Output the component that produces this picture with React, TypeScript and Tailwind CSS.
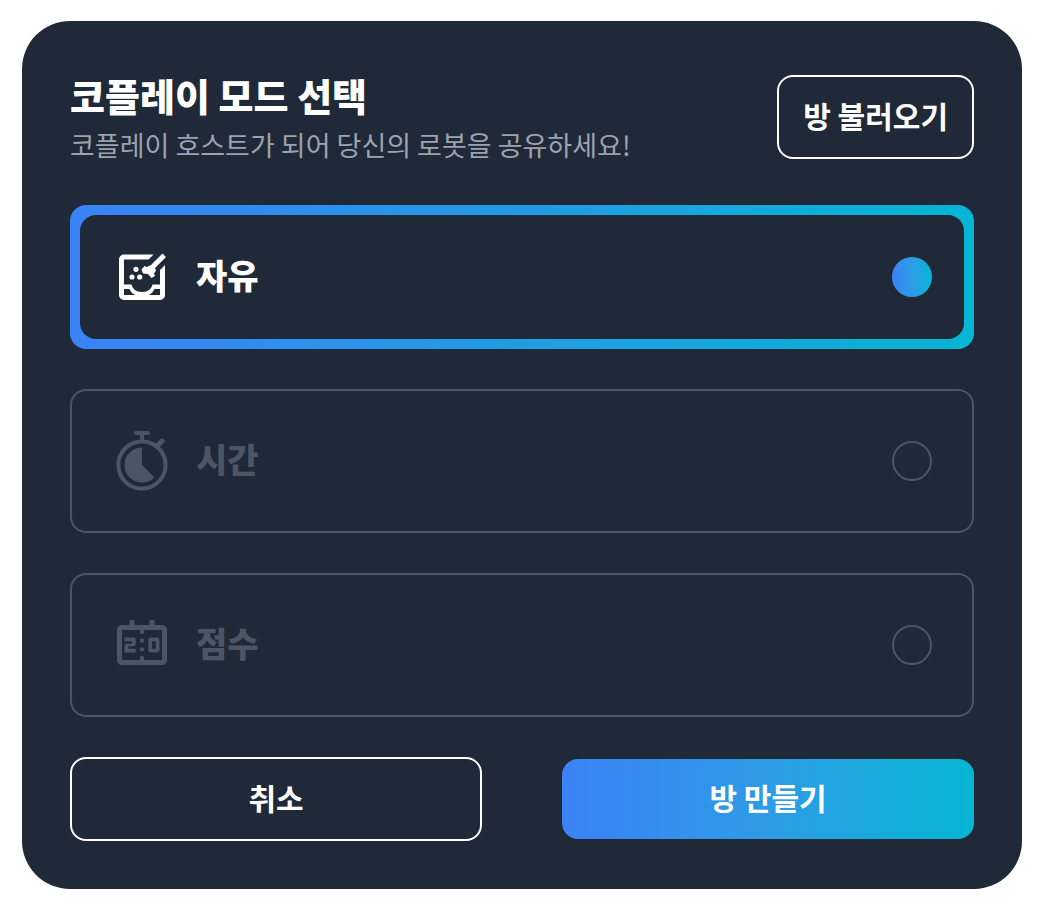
import { type ComponentType, useState } from "react";
import { MdOutlineScoreboard } from "react-icons/md";
import { RxLapTimer } from "react-icons/rx";

type ModeId = "free" | "time" | "score";

interface IconProps {
  className?: string;
}

interface ModeOptionProps {
  id: ModeId;
  label: string;
  icon: ComponentType<IconProps>;
  selected: boolean;
  disabled?: boolean;
  onSelect: (id: ModeId) => void;
}

function SandboxIcon({ className }: IconProps) {
  return (
    <svg className={className} viewBox="0 0 60 60" fill="currentColor" aria-hidden="true">
      <path
        d="M41.500 7.500H12a5 5 0 0 0-5 5V48a5 5 0 0 0 5 5h36a5 5 0 0 0 5-5V18l-5 5v14.500h-7.500C39.500 42 36 45 30 45S20.500 42 19.500 37.500H12v-25h24.500ZM12 42h5.500c1 2.500 3 4.500 5.500 6H12ZM48 42v6H37c2.500-1.500 4.500-3.500 5.500-6Z"
        fillRule="evenodd"
      />
      <circle cx="24" cy="22.300" r="2.600" />
      <circle cx="20" cy="30" r="2.600" />
      <circle cx="27.700" cy="30" r="2.600" />
      <path d="M50.500 6.500L54 10 43 21l1 2.500-2 3 1 2.500-3.500 2-3.500-4-5-.500-1.500-4 3-3.500 2.500 1 2.500-1.500h1Z" />
    </svg>
  );
}

const MODES: { id: ModeId; label: string; icon: ComponentType<IconProps>; disabled?: boolean }[] = [
  { id: "free", label: "자유", icon: SandboxIcon },
  { id: "time", label: "시간", icon: RxLapTimer, disabled: true },
  { id: "score", label: "점수", icon: MdOutlineScoreboard, disabled: true },
];

function ModeOption({ id, label, icon: Icon, selected, disabled, onSelect }: ModeOptionProps) {
  return (
    <label
      className={
        selected
          ? "block h-36 rounded-2xl bg-linear-to-r/srgb from-[#3b82f6] to-[#06b6d4] p-[10px] text-white"
          : "block h-36 rounded-2xl border-2 border-[#4b5563] p-2 text-[#4b5563]"
      }
    >
      <span className="flex h-full items-center gap-6 rounded-2xl bg-[#1f2937] px-8">
        <Icon className="size-[60px] shrink-0" />
        <span className="flex-1 pb-1 text-[34px] leading-[52px] font-black">{label}</span>
        <input
          type="radio"
          name="mode"
          value={id}
          checked={selected}
          disabled={disabled}
          onChange={() => onSelect(id)}
          className={
            selected
              ? "size-10 appearance-none rounded-full bg-linear-to-r/srgb from-[#3b82f6] via-[#2d9ce6] to-[#06b6d4]"
              : "size-10 appearance-none rounded-full border-2 border-[#4b5563]"
          }
        />
      </span>
    </label>
  );
}

export default function App() {
  const [mode, setMode] = useState<ModeId>("free");

  return (
    <div className="min-h-screen bg-white px-[22px] py-[21px] font-['Noto_Sans_CJK_KR',sans-serif]">
      <main className="flex flex-col gap-10 rounded-[48px] bg-[#1f2937] p-12 text-white">
        <header className="flex items-center justify-between">
          <div>
            <h1 className="pb-1 text-[38px] leading-[52px] font-black">코플레이 모드 선택</h1>
            <p className="text-[27px] leading-10 text-[#9ca3af]">
              코플레이 호스트가 되어 당신의 로봇을 공유하세요!
            </p>
          </div>
          <button
            type="button"
            className="h-[84px] shrink-0 rounded-2xl border-2 border-white px-6 pb-1 text-[30px] leading-10 font-bold"
          >
            방 불러오기
          </button>
        </header>

        <div role="radiogroup" aria-label="코플레이 모드 선택" className="flex flex-col gap-10">
          {MODES.map((item) => (
            <ModeOption key={item.id} {...item} selected={mode === item.id} onSelect={setMode} />
          ))}
        </div>

        <div className="grid grid-cols-2 items-center gap-20">
          <button
            type="button"
            className="h-[84px] rounded-2xl border-2 border-white pb-1 text-[30px] leading-10 font-bold"
          >
            취소
          </button>
          <button
            type="button"
            className="h-20 rounded-2xl bg-linear-to-r/srgb from-[#3b82f6] via-[#2d9ce6] to-[#06b6d4] pb-1 text-[30px] leading-10 font-bold"
          >
            방 만들기
          </button>
        </div>
      </main>
    </div>
  );
}
